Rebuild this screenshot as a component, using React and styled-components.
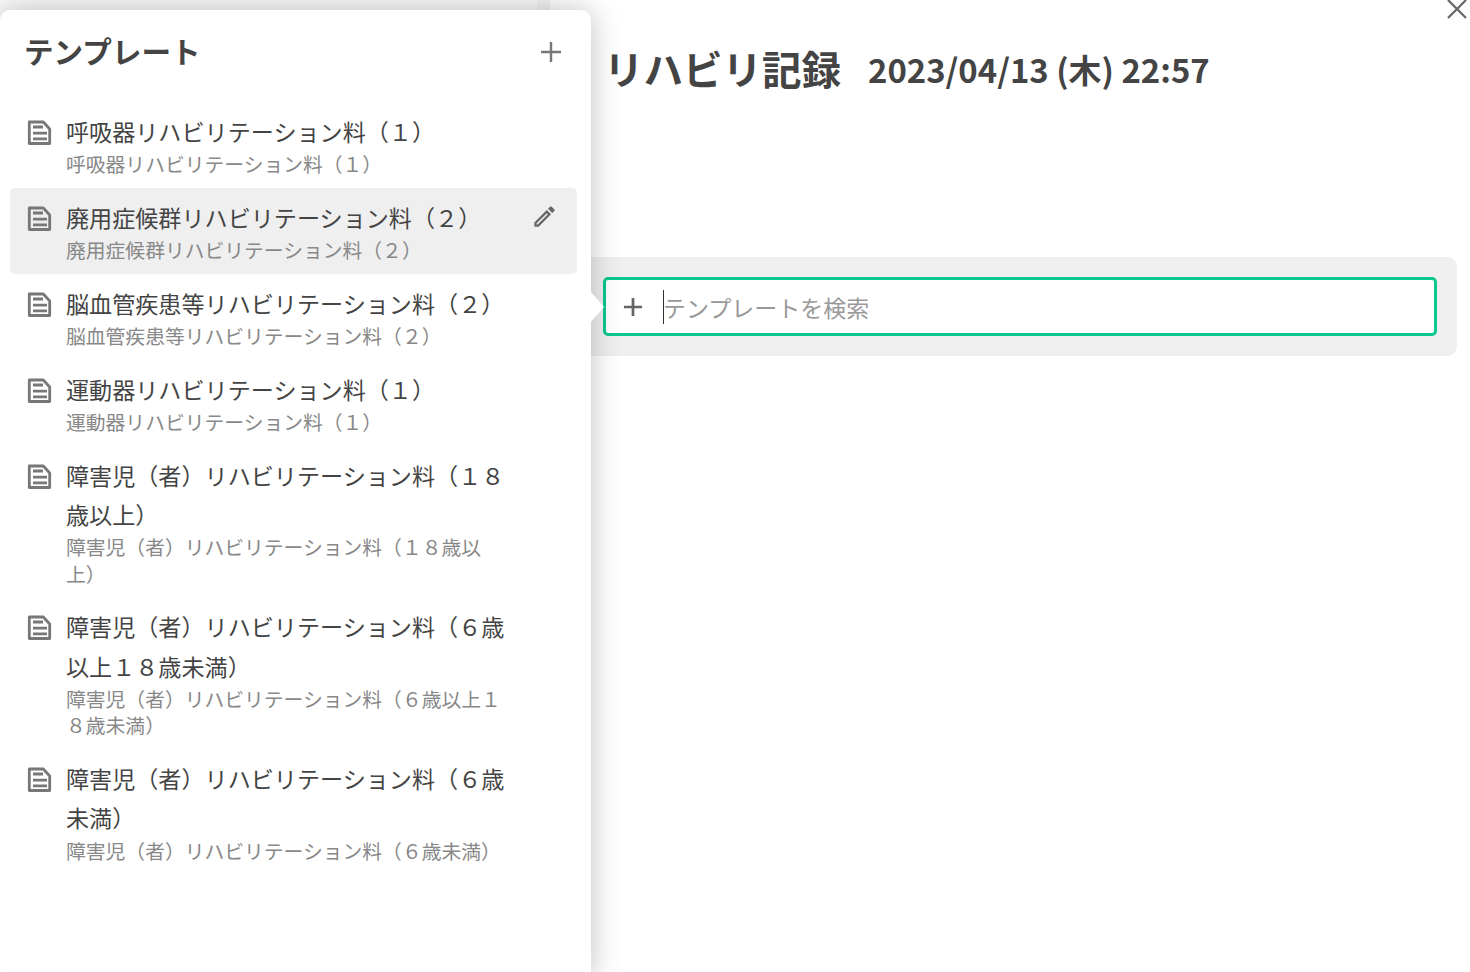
import React from "react";
import styled, { createGlobalStyle } from "styled-components";
import { MdOutlineEdit } from "react-icons/md";

const GlobalStyle = createGlobalStyle`
  html, body {
    margin: 0;
    padding: 0;
    height: 100%;
    overflow: hidden;
    background: #fff;
    font-family: "Noto Sans CJK JP", "Noto Sans", sans-serif;
  }
`;

const Page = styled.div`
  position: relative;
  display: flex;
  width: 1470px;
  height: 972px;
  overflow: hidden;
`;

const Backdrop = styled.div`
  width: 537px;
  background: #fafafa;
  flex-shrink: 0;
`;

const Divider = styled.div`
  width: 13px;
  background: #f3f3f3;
  flex-shrink: 0;
`;

const Main = styled.main`
  flex: 1;
  background: #fff;
  padding: 41px 13px 0 0;
`;

const RecordHead = styled.div`
  display: flex;
  align-items: flex-start;
  gap: 27px;
  padding-left: 54px;
  height: 216px;
  color: #444;
`;

const RecordTitle = styled.h1`
  margin: 0;
  font-size: 39.5px;
  line-height: 54px;
  font-weight: 700;
`;

const RecordDate = styled.span`
  font-size: 32.9px;
  line-height: 54px;
  margin-top: 1px;
  font-weight: 700;
`;

const SearchBar = styled.div`
  background: #efefef;
  border-radius: 10px;
  padding: 20px;
  padding-left: 53px;
  height: 99px;
  box-sizing: border-box;
`;

const SearchBox = styled.div`
  display: flex;
  align-items: center;
  height: 59px;
  box-sizing: border-box;
  background: #fff;
  border: 3px solid #0ac88e;
  border-radius: 5px;
  padding-left: 17px;
  gap: 20px;
`;

const Caret = styled.span`
  width: 1px;
  height: 34px;
  background: #333;
`;

const Placeholder = styled.span`
  font-size: 23px;
  line-height: 34px;
  color: #999;
  margin-left: -21px;
`;

const Popover = styled.aside`
  position: absolute;
  left: 0;
  top: 10px;
  width: 591px;
  height: 970px;
  background: #fff;
  border-radius: 10px;
  box-shadow: 0 0 30px rgba(0, 0, 0, 0.25);
  box-sizing: border-box;
`;

const Arrow = styled.div`
  position: absolute;
  left: 591px;
  top: 282px;
  width: 0;
  height: 0;
  border-top: 15px solid transparent;
  border-bottom: 15px solid transparent;
  border-left: 13px solid #fff;
`;

const PopoverHead = styled.header`
  display: flex;
  align-items: flex-start;
  justify-content: space-between;
  box-sizing: border-box;
  height: 84px;
  padding: 19px 29px 0 24px;
  margin-bottom: 8.25px;
  color: #444;
`;

const PopoverTitle = styled.h2`
  margin: 0;
  font-size: 29.6px;
  line-height: 43px;
  font-weight: 700;
`;

const HeadAction = styled.span`
  display: flex;
  margin-top: 12px;
`;

const List = styled.ul`
  list-style: none;
  margin: 0;
  padding: 0 14px 0 10px;
`;

const Row = styled.li`
  position: relative;
  display: flex;
  gap: 14px;
  padding: 10px 16px 10.3px 16px;
  border-radius: 5px;
  background: ${(p) => (p.$active ? "#efefef" : "transparent")};
`;

const RowText = styled.div`
  width: 442px;
`;

const RowTitle = styled.div`
  font-size: 23.1px;
  line-height: 39.5px;
  color: #444;
`;

const RowSub = styled.div`
  font-size: 19.8px;
  line-height: 26.4px;
  margin-top: -0.4px;
  color: #888;
`;

const EditButton = styled.span`
  position: absolute;
  right: 19px;
  top: 15px;
  color: #666;
  display: flex;
`;

const DocSvg = styled.svg`
  flex-shrink: 0;
  margin-top: 7px;
  margin-bottom: -2px;
`;

const DocIcon = () => (
  <DocSvg width="26" height="28" viewBox="0 0 26 28" fill="none" stroke="#777" strokeWidth="2.8">
    <path d="M3.3 3h14l6.4 7v14.5H3.3z" strokeLinejoin="round" />
    <path d="M7 8h10M7 14.2h14M7 19.8h14" />
  </DocSvg>
);

const PlusIcon = ({ size = 22, color = "#777", weight = 2.4 }) => (
  <svg width={size} height={size} viewBox="0 0 22 22" stroke={color} strokeWidth={weight}>
    <path d="M11 1v20M1 11h20" />
  </svg>
);

const CloseButton = styled.span`
  position: absolute;
  right: 2px;
  top: -2px;
  display: flex;
`;

const templates = [
  { title: "呼吸器リハビリテーション料（１）" },
  { title: "廃用症候群リハビリテーション料（２）", active: true },
  { title: "脳血管疾患等リハビリテーション料（２）" },
  { title: "運動器リハビリテーション料（１）" },
  { title: "障害児（者）リハビリテーション料（１８歳以上）" },
  { title: "障害児（者）リハビリテーション料（６歳以上１８歳未満）" },
  { title: "障害児（者）リハビリテーション料（６歳未満）" },
];

export default function App() {
  return (
    <>
      <GlobalStyle />
      <Page>
        <Backdrop />
        <Divider />
        <Main>
          <RecordHead>
            <RecordTitle>リハビリ記録</RecordTitle>
            <RecordDate>2023/04/13 (木) 22:57</RecordDate>
          </RecordHead>
          <SearchBar>
            <SearchBox>
              <PlusIcon size={20} color="#666" weight={3} />
              <Caret />
              <Placeholder>テンプレートを検索</Placeholder>
            </SearchBox>
          </SearchBar>
        </Main>
        <CloseButton>
          <svg width="22" height="22" viewBox="0 0 22 22" stroke="#666" strokeWidth="2.2">
            <path d="M2 2l18 18M20 2L2 20" />
          </svg>
        </CloseButton>
        <Popover>
          <PopoverHead>
            <PopoverTitle>テンプレート</PopoverTitle>
            <HeadAction>
              <PlusIcon />
            </HeadAction>
          </PopoverHead>
          <List>
            {templates.map((t) => (
              <Row key={t.title} $active={t.active}>
                <DocIcon />
                <RowText>
                  <RowTitle>{t.title}</RowTitle>
                  <RowSub>{t.title}</RowSub>
                </RowText>
                {t.active && (
                  <EditButton>
                    <MdOutlineEdit size={27} />
                  </EditButton>
                )}
              </Row>
            ))}
          </List>
          <Arrow />
        </Popover>
      </Page>
    </>
  );
}
